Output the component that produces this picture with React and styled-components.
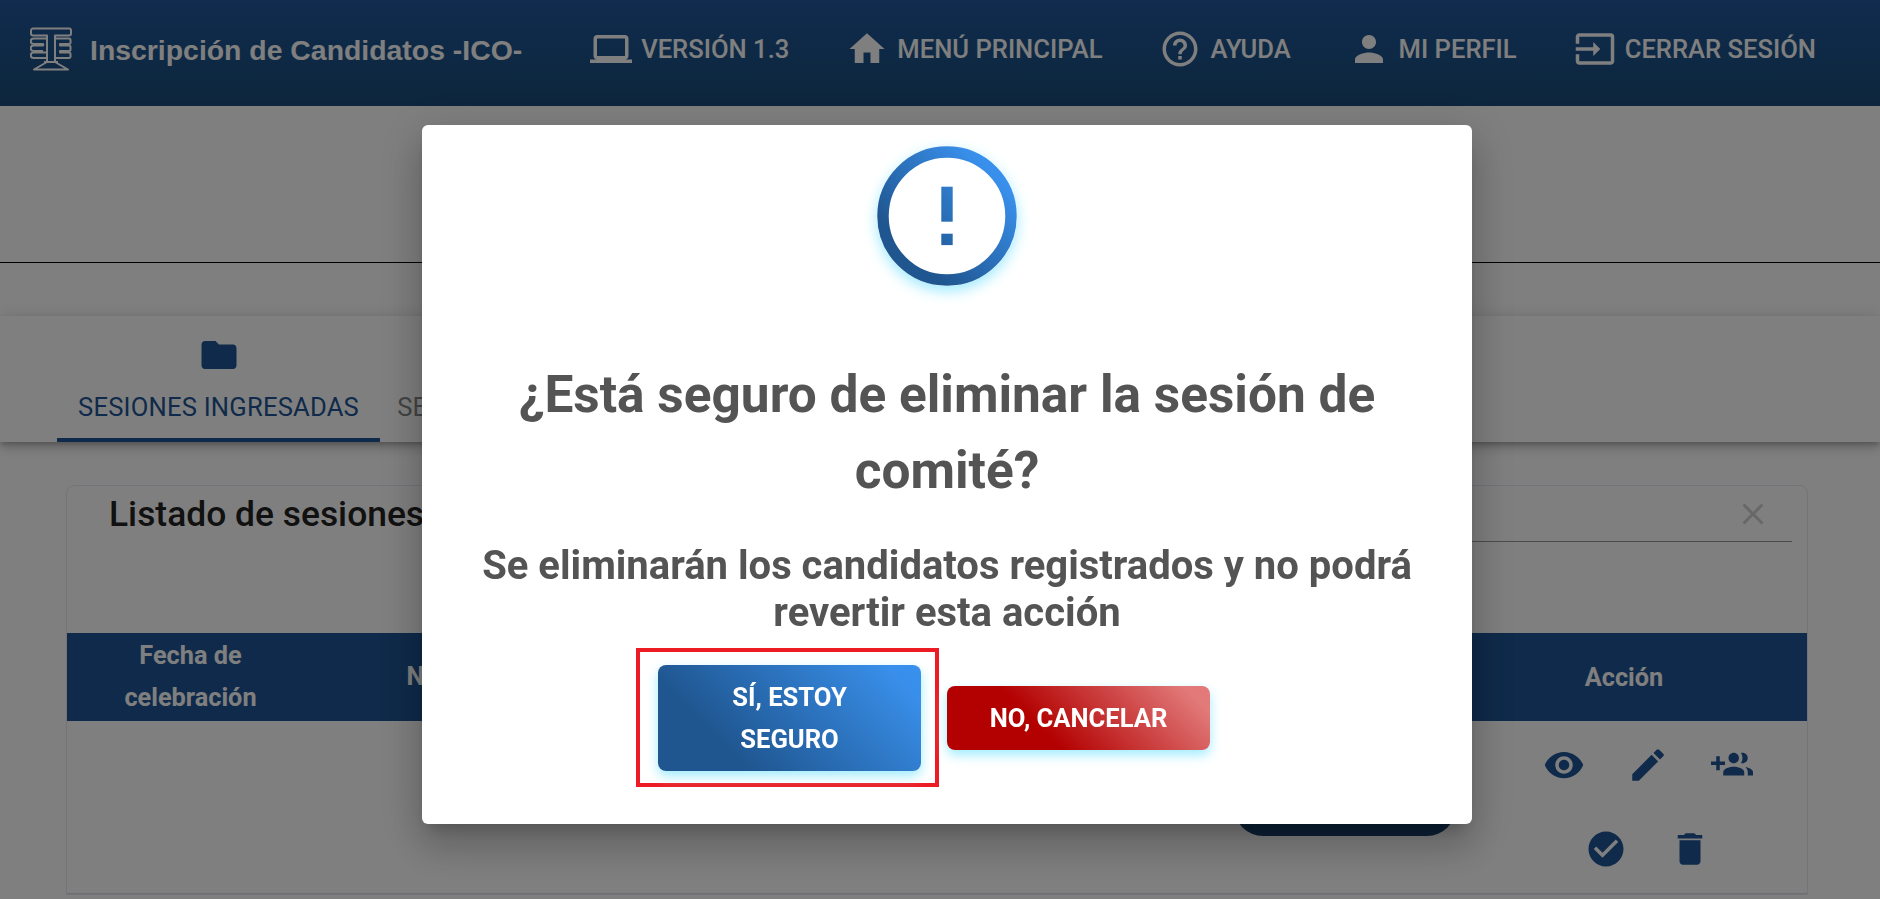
import React from "react";
import styled, { createGlobalStyle } from "styled-components";
import {
  MdOutlineLaptop,
  MdHome,
  MdHelpOutline,
  MdPerson,
  MdInput,
  MdFolder,
  MdClose,
  MdVisibility,
  MdEdit,
  MdCheckCircle,
  MdDelete,
} from "react-icons/md";

const GlobalStyle = createGlobalStyle`
  html, body {
    margin: 0;
    padding: 0;
    height: 100%;
    overflow: hidden;
    background: #fff;
    font-family: Roboto, "Liberation Sans", sans-serif;
  }
`;

const Page = styled.div`
  height: 899px;
  overflow: hidden;
  background: #fff;
`;

const Header = styled.header`
  height: 106px;
  box-sizing: border-box;
  display: flex;
  align-items: center;
  padding: 0 64px 8px 30px;
  background: linear-gradient(180deg, #20589c, #1a4d7a);
  color: #fff;
`;

const Brand = styled.div`
  display: flex;
  align-items: center;
  gap: 18px;
  font-family: "Liberation Sans", Arial, sans-serif;
  font-weight: 700;
  font-size: 28.4px;
`;

const BrandName = styled.span`
  padding-top: 2px;
`;

const Nav = styled.nav`
  margin-left: auto;
  display: flex;
  align-items: center;
  gap: 57px;
`;

const NavItem = styled.a`
  display: flex;
  align-items: center;
  gap: 9px;
  color: #fff;
  font-size: 25.6px;
  font-weight: 500;
  white-space: nowrap;
  svg {
    font-size: 42px;
    display: block;
  }
`;

const Hero = styled.div`
  height: 156px;
  border-bottom: 1px solid #000;
`;

const TabBand = styled.div`
  margin-top: 53px;
  height: 126px;
  display: flex;
  padding-left: 57px;
  background: #fff;
  box-shadow: 0 3px 5px -1px rgba(0, 0, 0, 0.2), 0 6px 10px rgba(0, 0, 0, 0.14),
    0 1px 18px rgba(0, 0, 0, 0.12);
`;

const Tab = styled.div`
  box-sizing: border-box;
  width: 323px;
  padding-top: 18px;
  display: flex;
  flex-direction: column;
  align-items: center;
  font-size: 25.6px;
  font-weight: 400;
  letter-spacing: 0.2px;
  white-space: nowrap;
  color: ${(p) => (p.$active ? "#1e5494" : "#888")};
  border-bottom: 4px solid ${(p) => (p.$active ? "#1e5494" : "transparent")};
  svg {
    font-size: 42px;
    margin-bottom: 16px;
    display: block;
  }
`;

const Card = styled.section`
  margin: 43px 72px 0 66px;
  border: 1px solid #e6e6f5;
  border-radius: 8px 8px 0 0;
  background: #fff;
`;

const CardTop = styled.div`
  height: 147px;
  display: flex;
  align-items: flex-start;
  justify-content: space-between;
`;

const CardTitle = styled.h2`
  margin: 8px 0 0 42px;
  font-size: 35.4px;
  line-height: 40px;
  font-weight: 500;
  color: #222;
`;

const Search = styled.div`
  width: 600px;
  height: 56px;
  margin-right: 15px;
  display: flex;
  align-items: center;
  justify-content: flex-end;
  padding-right: 21px;
  box-sizing: border-box;
  border-bottom: 1px solid #999;
  color: #d0d0d0;
  svg {
    font-size: 36px;
  }
`;

const Columns = styled.div`
  display: grid;
  grid-template-columns: 247px 276px 1fr 222px 351px;
`;

const HeadRow = styled(Columns)`
  height: 88px;
  background: #1e5494;
  color: #fff;
  font-size: 25.3px;
  line-height: 42px;
  font-weight: 700;
  text-align: center;
  align-items: center;
`;

const ActionHead = styled.div`
  padding: 1px 15px 0 0;
`;

const BodyRow = styled(Columns)`
  height: 172px;
  align-items: center;
  border-bottom: 1px solid #ddd;
`;

const StatusPill = styled.div`
  grid-column: 4;
  height: 58px;
  border-radius: 29px;
  background: #18406c;
`;

const ActionCell = styled.div`
  grid-column: 5;
  display: flex;
  flex-wrap: wrap;
  justify-content: center;
  padding-left: 32px;
  color: #1e5494;
`;

const ActionButton = styled.span`
  width: 84px;
  height: 84px;
  display: flex;
  align-items: center;
  justify-content: center;
  svg {
    font-size: 42px;
  }
`;

const Overlay = styled.div`
  position: fixed;
  inset: 0;
  display: flex;
  justify-content: center;
  align-items: flex-start;
  padding: 125px 0 0 14px;
  background: rgba(0, 0, 0, 0.5);
`;

const Modal = styled.div`
  width: 1050px;
  height: 699px;
  box-sizing: border-box;
  padding-top: 21px;
  display: flex;
  flex-direction: column;
  align-items: center;
  background: #fff;
  border-radius: 6px;
  color: #545454;
  text-align: center;
  box-shadow: 0 11px 15px -7px rgba(0, 0, 0, 0.2), 0 24px 38px 3px rgba(0, 0, 0, 0.14),
    0 9px 46px 8px rgba(0, 0, 0, 0.12);
`;

const AlertBadge = styled.span`
  width: 140px;
  height: 140px;
  border-radius: 50%;
  box-shadow: 0 5px 14px #9feaff;
  svg {
    display: block;
  }
`;

const ModalTitle = styled.h2`
  margin: 71px 40px 0;
  font-size: 51.4px;
  line-height: 76px;
  font-weight: 700;
`;

const ModalText = styled.p`
  margin: 33px 40px 0;
  font-size: 40px;
  line-height: 47px;
  font-weight: 700;
`;

const ButtonRow = styled.div`
  display: flex;
  align-items: center;
  gap: 8px;
  padding-right: 48px;
  margin-top: 12px;
`;

const Highlight = styled.div`
  border: 4px solid #ed1c24;
  padding: 13px 14px 12px 18px;
`;

const ConfirmButton = styled.button`
  width: 263px;
  box-sizing: border-box;
  border: 0;
  border-radius: 8px;
  padding: 11px 40px;
  display: block;
  font-family: inherit;
  font-size: 25.6px;
  line-height: 42px;
  font-weight: 700;
  color: #fff;
  background: ${(p) =>
    p.$danger
      ? "linear-gradient(45deg, #b30000 35%, #e27a7a 92%)"
      : "linear-gradient(45deg, #1f5690 25%, #3990ec 92%)"};
  box-shadow: 0 5px 12px #a0ecff;
`;

function AlertIcon() {
  return (
    <svg width="140" height="140" viewBox="0 0 140 140">
      <defs>
        <linearGradient id="alertGrad" gradientUnits="userSpaceOnUse" x1="20" y1="120" x2="120" y2="20">
          <stop offset="0.15" stopColor="#1f5690" />
          <stop offset="0.95" stopColor="#3990ec" />
        </linearGradient>
      </defs>
      <circle cx="70" cy="70" r="64" fill="#fff" stroke="url(#alertGrad)" strokeWidth="11.5" />
      <rect x="64.3" y="40.7" width="11.4" height="35" fill="url(#alertGrad)" />
      <rect x="64.3" y="87.7" width="11.4" height="11.4" fill="url(#alertGrad)" />
    </svg>
  );
}

function GroupAddIcon() {
  return (
    <svg width="42" height="42" viewBox="0 0 24 24" fill="currentColor">
      <path d="M8 10H5V7H3v3H0v2h3v3h2v-3h3v-2zm10 1c1.66 0 2.99-1.34 2.99-3S19.66 5 18 5c-.32 0-.63.05-.91.14.57.81.9 1.79.9 2.86s-.34 2.04-.9 2.86c.28.09.59.14.91.14zm-5 0c1.66 0 2.99-1.34 2.99-3S14.66 5 13 5s-3 1.34-3 3 1.34 3 3 3zm6.62 2.16c.83.73 1.38 1.66 1.38 2.84v2h3v-2c0-1.54-2.37-2.49-4.38-2.84zM13 13c-2 0-6 1-6 3v2h12v-2c0-2-4-3-6-3z" />
    </svg>
  );
}

function Logo() {
  return (
    <svg width="42" height="44" viewBox="0 0 42 44" fill="none" stroke="#fff" strokeWidth="2" strokeLinejoin="round">
      <path d="M3 1.5H39a2 2 0 0 1 2 2v3a2 2 0 0 1-2 2H25V35L38 42.5H4L17 35V8.5H3a2 2 0 0 1-2-2v-3a2 2 0 0 1 2-2z" />
      <path d="M14 35H28" />
      <path d="M17 11.5H3.5a2.7 2.7 0 0 0 0 5.5H13a1 1 0 0 1 0 1.5H3.5a2.7 2.7 0 0 0 0 5.5H13M17 25.5H3.5a2.7 2.7 0 0 0 0 5.5H17" />
      <path d="M25 11.5H39a1.5 1.5 0 0 1 1.5 1.5v2.5a1.5 1.5 0 0 1-1.5 1.5H30v1.5H39a1.5 1.5 0 0 1 1.5 1.5v2.5a1.5 1.5 0 0 1-1.5 1.5H30v1.5H39a1.5 1.5 0 0 1 1.5 1.5v2.5a1.5 1.5 0 0 1-1.5 1.5H25" />
    </svg>
  );
}

const links = [
  { icon: MdOutlineLaptop, label: "VERSIÓN 1.3" },
  { icon: MdHome, label: "MENÚ PRINCIPAL" },
  { icon: MdHelpOutline, label: "AYUDA" },
  { icon: MdPerson, label: "MI PERFIL" },
  { icon: MdInput, label: "CERRAR SESIÓN" },
];

const actions = [MdVisibility, MdEdit, GroupAddIcon, MdCheckCircle, MdDelete];

export default function App() {
  return (
    <Page>
      <GlobalStyle />
      <Header>
        <Brand>
          <Logo />
          <BrandName>Inscripción de Candidatos -ICO-</BrandName>
        </Brand>
        <Nav>
          {links.map(({ icon: Icon, label }) => (
            <NavItem key={label}>
              <Icon />
              {label}
            </NavItem>
          ))}
        </Nav>
      </Header>
      <Hero />
      <TabBand>
        <Tab $active>
          <MdFolder />
          SESIONES INGRESADAS
        </Tab>
        <Tab>
          <MdFolder />
          SESIONES PROCESADAS
        </Tab>
      </TabBand>
      <Card>
        <CardTop>
          <CardTitle>Listado de sesiones</CardTitle>
          <Search>
            <MdClose />
          </Search>
        </CardTop>
        <HeadRow>
          <div>
            Fecha de
            <br />
            celebración
          </div>
          <div>Nombre</div>
          <div />
          <div />
          <ActionHead>Acción</ActionHead>
        </HeadRow>
        <BodyRow>
          <StatusPill />
          <ActionCell>
            {actions.map((Icon, i) => (
              <ActionButton key={i}>
                <Icon />
              </ActionButton>
            ))}
          </ActionCell>
        </BodyRow>
      </Card>
      <Overlay>
        <Modal>
          <AlertBadge>
            <AlertIcon />
          </AlertBadge>
          <ModalTitle>¿Está seguro de eliminar la sesión de comité?</ModalTitle>
          <ModalText>Se eliminarán los candidatos registrados y no podrá revertir esta acción</ModalText>
          <ButtonRow>
            <Highlight>
              <ConfirmButton>
                SÍ, ESTOY
                <br />
                SEGURO
              </ConfirmButton>
            </Highlight>
            <ConfirmButton $danger>NO, CANCELAR</ConfirmButton>
          </ButtonRow>
        </Modal>
      </Overlay>
    </Page>
  );
}
